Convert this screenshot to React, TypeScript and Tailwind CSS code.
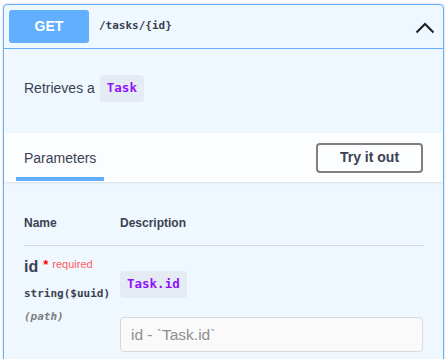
import React from "react";

const sans = { fontFamily: '"Liberation Sans", Arial, sans-serif' };
const mono = { fontFamily: '"DejaVu Sans Mono", monospace' };

function Chevron() {
  return (
    <svg width="20" height="12" viewBox="0 0 20 12" className="text-[#1f1f1f]">
      <polyline
        points="1.5,10.5 10,2 18.5,10.5"
        fill="none"
        stroke="currentColor"
        strokeWidth="2"
      />
    </svg>
  );
}

function Code({ children }: { children: React.ReactNode }) {
  return (
    <span
      className="inline-flex items-center h-[27px] px-[7px] rounded-[4px] bg-[#e4ebf2] text-[#9012fe] font-bold text-[12.5px]"
      style={mono}
    >
      {children}
    </span>
  );
}

export default function App() {
  return (
    <div className="w-[448px] h-[359px] overflow-hidden bg-white" style={sans}>
      <div className="mt-[4px] ml-[3px] w-[441px] h-[400px] border border-[#61affe] rounded-[4px] bg-[#eff7ff] shadow-[0_0_3px_rgba(0,0,0,0.19)] text-[#3b4151]">
        {/* summary */}
        <div className="flex items-center p-[5px] border-b border-[#61affe]">
          <div className="w-[80px] h-[33px] rounded-[3px] bg-[#61affe] text-white font-bold text-[14px] flex items-center justify-center">
            GET
          </div>
          <span className="ml-[10px] text-[11px] font-bold text-[#3b4151]" style={mono}>
            /tasks/{"{id}"}
          </span>
          <div className="ml-auto mr-[3px] mt-[2px]">
            <Chevron />
          </div>
        </div>

        {/* description */}
        <div className="flex items-center px-[20px] pt-[26px] pb-[31px] text-[14px]">
          <span>Retrieves a</span>
          <span className="ml-[5px]">
            <Code>Task</Code>
          </span>
        </div>

        {/* tab header */}
        <div className="flex items-stretch justify-between h-[49px] pl-[12px] pr-[20px] bg-[#fcfdff] shadow-[0_1px_2px_rgba(0,0,0,0.1)]">
          <div className="flex flex-col pt-[17px]">
            <span className="px-[8px] text-[14px] leading-[16px]">Parameters</span>
            <div className="mt-[11px] h-[4px] bg-[#61affe]" />
          </div>
          <div className="flex items-center">
            <button className="w-[107px] h-[30px] border-2 border-[#808080] rounded-[4px] bg-transparent text-[14px] font-bold text-[#3b4151]">
              Try it out
            </button>
          </div>
        </div>

        {/* parameters table */}
        <div className="pt-[34px] pl-[20px] pr-[19px]">
          <div className="flex pb-[14px] border-b border-[#d5d8de] text-[12px] leading-[15px] font-bold">
            <div className="w-[96px]">Name</div>
            <div>Description</div>
          </div>
          <div className="flex pt-[11px]">
            <div className="w-[96px] flex flex-col">
              <div className="flex items-start">
                <span className="text-[16px] leading-[20px] font-bold">id</span>
                <span className="ml-[5px] mt-[2px] text-[13px] leading-[12px] font-bold text-[#ff0000]">*</span>
                <span className="ml-[4px] mt-[1px] text-[11px] leading-[12px] text-[#ff5c5c]">required</span>
              </div>
              <div className="mt-[10px] text-[11px] leading-[14px] font-bold" style={mono}>
                string($uuid)
              </div>
              <div className="mt-[9px] text-[11px] leading-[14px] font-bold italic text-[#808080]" style={mono}>
                (path)
              </div>
            </div>
            <div className="flex-1 flex flex-col items-start pt-[14px]">
              <Code>Task.id</Code>
              <input
                className="mt-[19px] w-[303px] h-[35px] px-[10px] rounded-[4px] border border-[#d9d9d9] bg-[#fafafa] text-[15.5px] placeholder:text-[#8e8e8e] outline-none"
                placeholder="id - `Task.id`"
                style={sans}
              />
            </div>
          </div>
        </div>
      </div>
    </div>
  );
}
